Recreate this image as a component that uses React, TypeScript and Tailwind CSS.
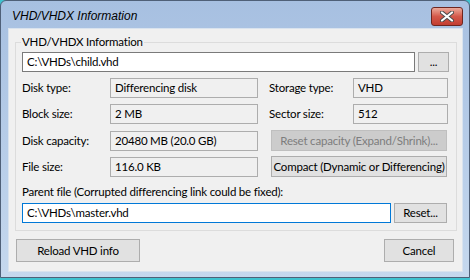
import React from "react";

const ui = { fontFamily: "Lato, 'Liberation Sans', sans-serif" };

function Field({ value, className = "" }: { value: string; className?: string }) {
  return (
    <div className={`h-[20px] border border-[#adadad] bg-[#f0f0f0] pl-[4px] flex items-center text-black whitespace-nowrap ${className}`}>
      {value}
    </div>
  );
}

function Btn({ label, className = "", disabled = false }: { label: string; className?: string; disabled?: boolean }) {
  return (
    <div
      className={`flex items-center justify-center border whitespace-nowrap ${
        disabled ? "bg-[#cccccc] border-[#bfbfbf] text-[#7d7d7d]" : "bg-[#e1e1e1] border-[#adadad] text-black"
      } ${className}`}
    >
      {label}
    </div>
  );
}

function CloseIcon() {
  return (
    <svg width="14" height="11" viewBox="0 0 14 11">
      <path d="M2 1.5 L12 9.5 M12 1.5 L2 9.5" stroke="#4a4a4a" strokeWidth="4" strokeLinecap="round" />
      <path d="M2 1.5 L12 9.5 M12 1.5 L2 9.5" stroke="#ffffff" strokeWidth="2.2" strokeLinecap="round" />
    </svg>
  );
}

export default function App() {
  return (
    <div className="w-[470px] h-[280px] bg-[#3fc2d0] overflow-hidden text-[11.5px] tracking-[-0.2px]" style={ui}>
      <div className="w-[470px] h-[278px] rounded-t-[6px] border border-[#4f6078] bg-gradient-to-b from-[#a7c0e1] to-[#c5d8ee] pl-[7px] pr-[6px] flex flex-col">
        {/* title bar */}
        <div className="h-[27px] flex items-start justify-between">
          <span
            className="mt-[8px] ml-[4px] text-[12px] tracking-normal leading-[14px] italic text-black"
            style={{ fontFamily: "'Liberation Sans', sans-serif" }}
          >
            VHD/VHDX Information
          </span>
          <div className="mt-[6px] w-[32px] h-[19px] rounded-[3px] border border-[#6e2620] bg-gradient-to-b from-[#eaa99b] via-[#d4584a] to-[#c23d31] flex items-center justify-center">
            <CloseIcon />
          </div>
        </div>

        {/* client area */}
        <div className="h-[244px] bg-[#f0f0f0] border border-[#d9e3ee] flex flex-col">
          <div className="relative mt-[13px] ml-[6px] w-[442px] h-[189px] border border-[#dcdcdc] pl-[6px] pt-[9px] flex flex-col">
            <span className="absolute left-[5px] top-[-9px] px-[1px] bg-[#f0f0f0] leading-[16px] text-black">
              VHD/VHDX Information
            </span>

            <div className="flex">
              <div className="w-[393px] h-[20px] border border-[#7a7a7a] bg-white pl-[4px] flex items-center">
                C:\VHDs\child.vhd
              </div>
              <Btn label="..." className="ml-[3px] w-[31px] h-[20px] text-[#1a1a8a]" />
            </div>

            <div className="mt-[6px] flex items-center">
              <span className="w-[88px]">Disk type:</span>
              <Field value="Differencing disk" className="w-[148px]" />
              <span className="ml-[11px] w-[84px]">Storage type:</span>
              <Field value="VHD" className="w-[95px]" />
            </div>

            <div className="mt-[6px] flex items-center">
              <span className="w-[88px]">Block size:</span>
              <Field value="2 MB" className="w-[148px]" />
              <span className="ml-[11px] w-[84px]">Sector size:</span>
              <Field value="512" className="w-[95px]" />
            </div>

            <div className="mt-[6px] flex items-center">
              <span className="w-[88px]">Disk capacity:</span>
              <Field value="20480 MB (20.0 GB)" className="w-[148px]" />
              <Btn label="Reset capacity (Expand/Shrink)..." disabled className="ml-[13px] w-[176px] h-[21px]" />
            </div>

            <div className="mt-[5px] flex items-center">
              <span className="w-[88px]">File size:</span>
              <Field value="116.0 KB" className="w-[148px]" />
              <Btn label="Compact (Dynamic or Differencing)" className="ml-[13px] w-[176px] h-[21px]" />
            </div>

            <div className="mt-[7px] h-[16px] leading-[16px] whitespace-nowrap">
              Parent file (Corrupted differencing link could be fixed):
            </div>

            <div className="mt-[3px] flex">
              <div className="w-[369px] h-[20px] border border-[#0078d7] bg-white pl-[4px] flex items-center">
                C:\VHDs\master.vhd
              </div>
              <Btn label="Reset..." className="ml-[3px] w-[53px] h-[20px]" />
            </div>
          </div>

          <div className="mt-[8px] px-[7px] flex justify-between">
            <Btn label="Reload VHD info" className="w-[124px] h-[23px]" />
            <Btn label="Cancel" className="w-[70px] h-[23px] mr-[1px]" />
          </div>
        </div>
      </div>
    </div>
  );
}
